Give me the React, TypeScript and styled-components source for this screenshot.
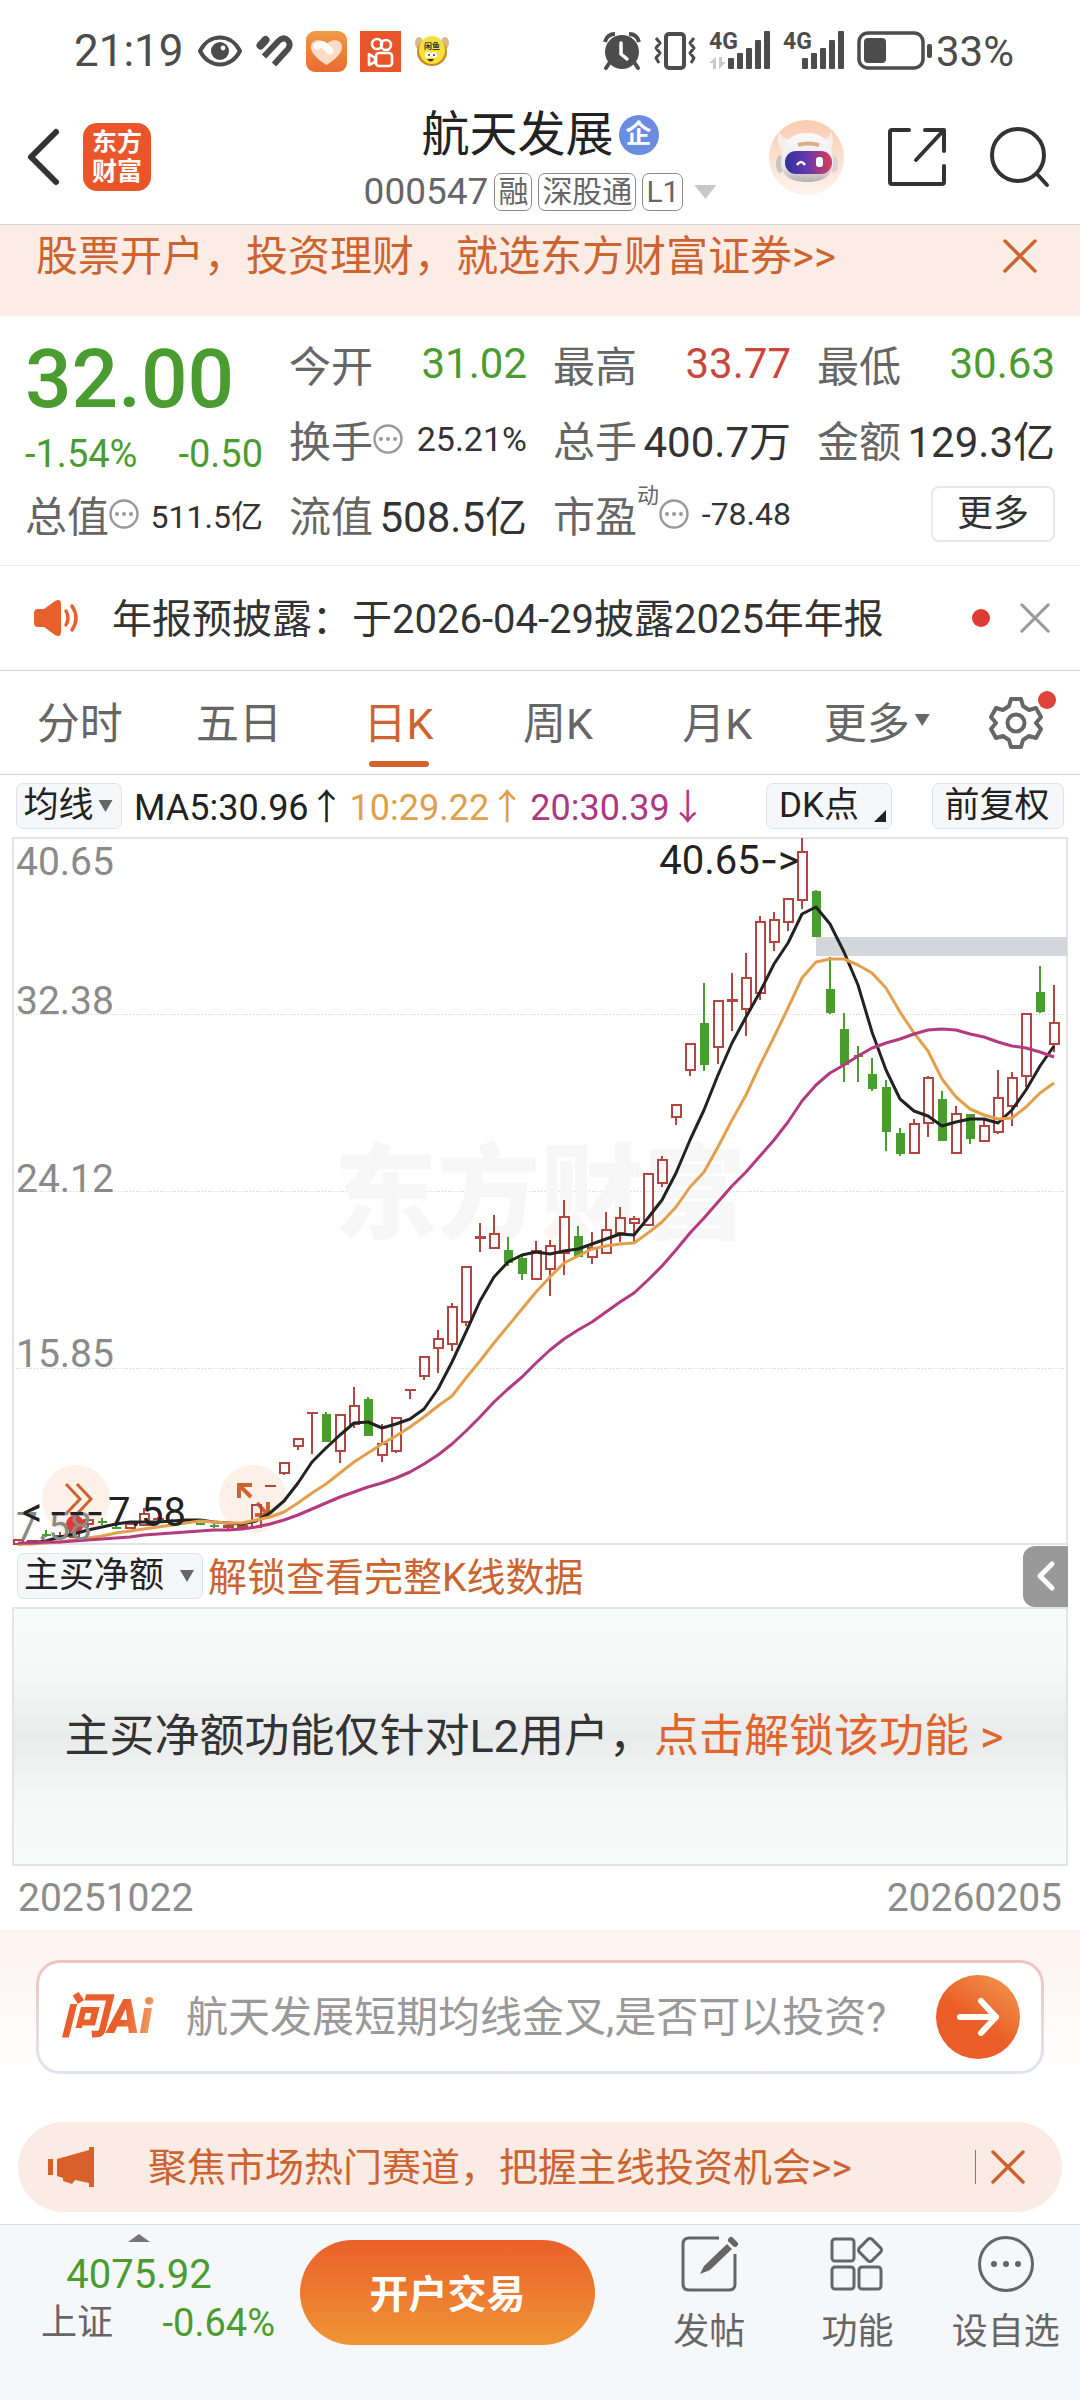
import React, { useState } from "react";
import styled, { createGlobalStyle, css } from "styled-components";

const ORANGE = "#cd6430";
const GREEN = "#4a9c30";
const RED = "#c9463d";

type Candle = [open: number, close: number, high: number, low: number, up: 0 | 1];

// body top, body bottom, wick top, wick bottom, 1 = red (up) / 0 = green (down)
const candles: Candle[] = [
  [702, 706, 702, 706, 1],
  [702, 703, 702, 703, 1],
  [696, 698, 692, 699, 0],
  [697, 699, 694, 702, 1],
  [692, 699, 690, 700, 1],
  [682, 686, 680, 689, 1],
  [683, 685, 680, 687, 0],
  [689, 690, 688, 690, 0],
  [686, 690, 685, 690, 1],
  [676, 687, 670, 688, 1],
  [680, 682, 679, 683, 1],
  [682, 683, 681, 684, 0],
  [683, 684, 682, 685, 1],
  [685, 687, 685, 687, 0],
  [687, 689, 686, 690, 0],
  [687, 690, 686, 691, 1],
  [687, 690, 686, 691, 1],
  [667, 689, 667, 689, 1],
  [647, 648, 647, 648, 1],
  [625, 635, 625, 637, 1],
  [601, 608, 601, 612, 1],
  [574, 575, 574, 616, 1],
  [576, 604, 574, 604, 0],
  [577, 613, 577, 625, 1],
  [568, 586, 549, 590, 1],
  [561, 598, 559, 598, 0],
  [606, 617, 586, 624, 1],
  [580, 613, 580, 615, 1],
  [551, 553, 551, 561, 1],
  [519, 538, 519, 542, 1],
  [501, 510, 492, 535, 1],
  [469, 506, 465, 513, 1],
  [429, 484, 429, 488, 1],
  [398, 401, 385, 414, 1],
  [396, 410, 377, 410, 1],
  [412, 425, 399, 428, 0],
  [420, 436, 418, 442, 0],
  [413, 441, 403, 441, 1],
  [408, 431, 402, 458, 1],
  [379, 415, 362, 437, 1],
  [398, 419, 388, 419, 0],
  [410, 419, 394, 426, 1],
  [392, 415, 374, 415, 1],
  [380, 395, 369, 404, 1],
  [381, 385, 378, 404, 1],
  [336, 387, 336, 387, 1],
  [322, 345, 318, 349, 1],
  [267, 279, 267, 287, 1],
  [206, 232, 206, 238, 1],
  [185, 227, 145, 233, 0],
  [163, 209, 163, 226, 1],
  [161, 164, 135, 193, 1],
  [140, 171, 115, 198, 1],
  [84, 155, 78, 162, 1],
  [82, 104, 74, 113, 1],
  [61, 84, 61, 93, 1],
  [14, 62, 0, 71, 1],
  [53, 99, 52, 99, 0],
  [151, 175, 119, 176, 0],
  [191, 227, 175, 244, 0],
  [217, 219, 208, 244, 0],
  [236, 251, 220, 253, 0],
  [249, 294, 242, 313, 0],
  [295, 316, 290, 318, 0],
  [286, 315, 281, 315, 1],
  [240, 285, 238, 299, 1],
  [261, 303, 253, 303, 0],
  [276, 315, 268, 315, 1],
  [276, 301, 276, 306, 0],
  [288, 303, 281, 303, 1],
  [260, 294, 232, 296, 1],
  [240, 268, 234, 288, 1],
  [176, 238, 176, 249, 1],
  [154, 174, 128, 175, 0],
  [185, 206, 147, 214, 1],
];

const ma5 = [
  706, 705, 703, 699, 696, 692, 689, 686, 684, 684, 684, 683, 682, 682, 684,
  685, 686, 683, 675, 663, 645, 624, 610, 597, 585, 584, 590, 586, 581, 571,
  551, 524, 494, 463, 439, 424, 417, 414, 416, 413, 411, 406, 401, 396, 397,
  380, 362, 335, 302, 272, 237, 205, 179, 154, 126, 105, 76, 69, 86, 114, 147,
  194, 232, 261, 273, 278, 288, 284, 281, 281, 285, 272, 252, 228, 208,
];

const ma10 = [
  706, 706, 705, 704, 702, 700, 698, 695, 693, 691, 689, 687, 685, 683, 684,
  685, 685, 682, 679, 674, 665, 655, 646, 635, 624, 615, 606, 598, 589, 579,
  568, 558, 540, 523, 505, 488, 471, 454, 439, 425, 418, 411, 408, 406, 405,
  395, 384, 369, 349, 334, 309, 282, 257, 227, 199, 170, 140, 124, 121, 121,
  127, 135, 150, 174, 195, 213, 241, 259, 271, 277, 281, 280, 269, 255, 245,
];

const ma20 = [
  705, 705, 704, 704, 703, 702, 701, 700, 699, 697, 696, 695, 694, 693, 692,
  692, 691, 689, 686, 682, 677, 671, 665, 659, 654, 649, 645, 640, 634, 626,
  617, 606, 593, 579, 564, 551, 539, 525, 512, 501, 492, 484, 474, 464, 455,
  442, 428, 412, 395, 380, 364, 348, 334, 318, 302, 284, 263, 247, 235, 227,
  218, 210, 205, 201, 196, 192, 191, 192, 196, 199, 204, 208, 210, 214, 219,
];

const axis = [
  { label: "40.65", y: 37 },
  { label: "32.38", y: 176 },
  { label: "24.12", y: 354 },
  { label: "15.85", y: 529 },
  { label: "7.58", y: 702 },
];

const tabs = ["分时", "五日", "日K", "周K", "月K", "更多"];

const candleX = (i: number) => 18 + i * 14;
const toPoints = (values: number[]) =>
  values.map((y, i) => `${candleX(i)},${y}`).join(" ");

const KLine = () => (
  <ChartSvg viewBox="12 -1 1056 708" role="img" aria-label="日K">
    {[176, 353, 530].map((y) => (
      <line
        key={y}
        x1="13"
        x2="1067"
        y1={y + 0.5}
        y2={y + 0.5}
        stroke="#cfcfcf"
        strokeDasharray="1 2"
      />
    ))}
    <text x="334" y="393" fontSize="103" fontWeight="900" fill="#f7f7f7">
      东方财富
    </text>
    <rect x="13" y="0" width="1054" height="706" fill="none" stroke="#e3e3e5" strokeWidth="2" />
    <rect x="816" y="99" width="251" height="19" fill="#d5d6dc" />
    {candles.map(([top, bottom, high, low, up], i) => {
      const x = candleX(i);
      if (!up) {
        return (
          <g key={i} fill="#489d2e">
            <rect x={x - 1} y={high} width="2" height={low - high} />
            <rect x={x - 4} y={top} width="9" height={Math.max(bottom - top, 2)} />
          </g>
        );
      }
      const flat = bottom - top < 4;
      return (
        <g key={i} fill="#b24640">
          <rect x={x - 1} y={high} width="2" height={top - high} />
          <rect x={x - 1} y={bottom} width="2" height={low - bottom} />
          {flat ? (
            <rect x={x - 5} y={top} width="11" height={Math.max(bottom - top, 2)} />
          ) : (
            <rect
              x={x - 4}
              y={top}
              width="9"
              height={bottom - top}
              fill="none"
              stroke="#b24640"
              strokeWidth="2"
            />
          )}
        </g>
      );
    })}
    <circle cx="75" cy="686" r="9" fill="#dd3d33" />
    <g fill="none" strokeWidth="3" strokeLinejoin="round">
      <polyline points={toPoints(ma5)} stroke="#222" />
      <polyline points={toPoints(ma10)} stroke="#e3a04c" />
      <polyline points={toPoints(ma20)} stroke="#b43a80" />
    </g>
    <g fontSize="39" fill="#8a8a8a">
      {axis.map((a) => (
        <text key={a.label} x="16" y={a.y}>
          {a.label}
        </text>
      ))}
    </g>
    <g fontSize="40" fill="#222">
      <text x="799" y="36" textAnchor="end">
        40.65<tspan fontFamily="Inter">-</tspan>&gt;
      </text>
      <text x="22" y="688">
        &lt;
        <tspan x="49" fontFamily="Inter">
          ---
        </tspan>
        <tspan x="108">7.58</tspan>
      </text>
    </g>
  </ChartSvg>
);

const SignalIcon = ({ data }: { data?: boolean }) => (
  <svg width="62" height="40" viewBox="0 0 62 40" fill="#4c4c4c">
    <text x="0" y="18" fontSize="23" fontWeight="700" fontFamily="Roboto, sans-serif">
      4G
    </text>
    {data && (
      <g fill="#c9c9c9">
        <path d="M0 32 7 26V38H4V32Z" />
        <path d="M10 26V38L17 31H13V26Z" />
      </g>
    )}
    <rect x="19" y="27" width="6" height="11" rx="1" />
    <rect x="28" y="22" width="6" height="16" rx="1" />
    <rect x="37" y="17" width="6" height="21" rx="1" />
    <rect x="46" y="9" width="6" height="29" rx="1" />
    <rect x="55" y="0" width="6" height="38" rx="1" />
  </svg>
);

const CloseIcon = ({ size }: { size: number }) => (
  <svg
    width={size}
    height={size}
    viewBox="0 0 34 34"
    fill="none"
    stroke="currentColor"
    strokeWidth="3.5"
    strokeLinecap="round"
  >
    <path d="M2 2 32 32M32 2 2 32" />
  </svg>
);

const InfoIcon = () => (
  <svg width="30" height="30" viewBox="0 0 30 30" fill="#999">
    <circle cx="15" cy="15" r="13.5" fill="none" stroke="#999" strokeWidth="2.4" />
    <circle cx="8" cy="15" r="2" />
    <circle cx="15" cy="15" r="2" />
    <circle cx="22" cy="15" r="2" />
  </svg>
);

const StatusIcons = () => (
  <StatusGroup>
    <Clock>21:19</Clock>
    <svg width="46" height="32" viewBox="0 0 46 32">
      <path
        d="M3 16C12-2 34-2 43 16C34 34 12 34 3 16Z"
        fill="none"
        stroke="#4c4c4c"
        strokeWidth="4"
        strokeLinejoin="round"
      />
      <circle cx="23" cy="16" r="9" fill="#4c4c4c" />
      <circle cx="26" cy="13" r="2.4" fill="#fff" />
    </svg>
    <svg
      width="37"
      height="32"
      viewBox="0 0 37 32"
      fill="none"
      stroke="#4c4c4c"
      strokeWidth="6"
    >
      <path d="M4.500 10.500 9.500 5" strokeWidth="8" strokeLinecap="round" />
      <path d="M8 21.500 22.500 6Q27 1.500 31.500 5Q35.500 9 32 14L18 29.500" />
    </svg>
    <svg width="41" height="41" viewBox="0 0 41 41">
      <defs>
        <linearGradient id="heartBg" x1="0" y1="0" x2="0" y2="1">
          <stop offset="0" stopColor="#f09a45" />
          <stop offset="1" stopColor="#ea6a33" />
        </linearGradient>
      </defs>
      <rect width="41" height="41" rx="9" fill="url(#heartBg)" />
      <path
        d="M20.500 34C11 28 5 22 5 16C5 8 15 7 20.500 13C26 7 36 8 36 16C36 22 30 28 20.500 34Z"
        fill="#fbdcc6"
      />
      <path d="M11 15Q16 11 20 16L24 20" stroke="#fff" strokeWidth="7" strokeLinecap="round" fill="none" />
    </svg>
    <svg width="41" height="41" viewBox="0 0 41 41" fill="none" stroke="#fff" strokeWidth="2.600">
      <rect width="41" height="41" fill="#e8552a" stroke="none" />
      <circle cx="17" cy="13" r="5" />
      <circle cx="26" cy="14" r="5" />
      <rect x="16" y="22" width="16" height="13" rx="3" />
      <path d="M9 23 15 27V31L9 34Z" strokeLinejoin="round" />
    </svg>
    <svg width="36" height="32" viewBox="0 0 36 32">
      <ellipse cx="5" cy="8" rx="4" ry="6" fill="#d9b98c" />
      <ellipse cx="31" cy="8" rx="4" ry="6" fill="#d9b98c" />
      <ellipse cx="18" cy="17" rx="15" ry="14" fill="#c98c22" />
      <ellipse cx="18" cy="15" rx="13" ry="14" fill="#f6e13c" />
      <text x="10" y="14" fontSize="8" fontWeight="700" fill="#333">
        闲鱼
      </text>
      <circle cx="14" cy="20" r="3" fill="#fff" />
      <circle cx="20" cy="20" r="3" fill="#fff" />
      <circle cx="15" cy="20" r="1" fill="#333" />
      <circle cx="20" cy="20" r="1" fill="#333" />
      <path d="M13 24Q17 29 20 24Z" fill="#5a2a17" />
    </svg>
  </StatusGroup>
);

const RobotIcon = () => (
  <svg width="75" height="75" viewBox="0 0 75 75">
    <defs>
      <linearGradient id="robotBg" x1="0" y1="0" x2="0" y2="1">
        <stop offset="0" stopColor="#f9ccb0" />
        <stop offset="1" stopColor="#fef4ee" />
      </linearGradient>
      <linearGradient id="robotHead" x1="0" y1="0" x2="0" y2="1">
        <stop offset="0" stopColor="#fbfafa" />
        <stop offset="0.700" stopColor="#e9e6e6" />
        <stop offset="1" stopColor="#b5afaf" />
      </linearGradient>
      <linearGradient id="robotFace" x1="0" y1="0" x2="1" y2="0">
        <stop offset="0" stopColor="#33309c" />
        <stop offset="0.450" stopColor="#6138ae" />
        <stop offset="1" stopColor="#d93f5c" />
      </linearGradient>
    </defs>
    <circle cx="37.500" cy="37.500" r="37.500" fill="url(#robotBg)" />
    <path d="M10 12Q6 24 14 31L24 20Q14 20 10 12ZM62 12Q67 24 60 31L50 20Q60 20 62 12Z" fill="#f6eeeb" />
    <ellipse cx="11" cy="44" rx="4" ry="9" fill="#c9c3c3" />
    <ellipse cx="65" cy="44" rx="4" ry="9" fill="#d9d3d3" />
    <path
      d="M38 13C57 13 64 26 64 43C64 57 52 62 38 62C24 62 12 57 12 43C12 26 19 13 38 13Z"
      fill="url(#robotHead)"
    />
    <path d="M29 25Q39 22 50 25" stroke="#dcae86" strokeWidth="4" fill="none" />
    <rect x="16" y="31" width="47" height="23" rx="11" fill="url(#robotFace)" />
    <path d="M28 45Q32 39 36 45" stroke="#fff" strokeWidth="2.500" fill="none" />
    <rect x="47" y="37" width="7" height="10" rx="3" fill="#fff" />
  </svg>
);

const App = () => {
  const [active, setActive] = useState("日K");
  const [question, setQuestion] = useState("");

  return (
    <Page>
      <GlobalStyle />
      <StatusBar>
        <StatusIcons />
        <StatusGroup $end>
          <svg width="38" height="38" viewBox="0 0 38 38" fill="#4c4c4c">
            <circle cx="19" cy="20" r="17" />
            <path d="M7 30 3 36M31 30 35 36" stroke="#4c4c4c" strokeWidth="4" strokeLinecap="round" />
            <path
              d="M2 10Q4 2 12 2M36 10Q34 2 26 2"
              fill="none"
              stroke="#4c4c4c"
              strokeWidth="4"
            />
            <path d="M18 11V22L24 27" fill="none" stroke="#fff" strokeWidth="3.500" strokeLinecap="round" />
          </svg>
          <svg
            width="44"
            height="40"
            viewBox="0 0 44 40"
            fill="none"
            stroke="#4c4c4c"
            strokeWidth="4"
            strokeLinejoin="round"
          >
            <rect x="13" y="3" width="18" height="34" rx="3" />
            <path d="M3 7 7 12 3 17 7 22 3 27 6 32M41 7 37 12 41 17 37 22 41 27 38 32" strokeWidth="3" />
          </svg>
          <SignalIcon data />
          <SignalIcon />
          <svg width="75" height="40" viewBox="0 0 75 40" fill="#4c4c4c">
            <rect x="2" y="2" width="64" height="35" rx="9" fill="none" stroke="#4c4c4c" strokeWidth="3.500" />
            <rect x="7" y="7" width="22" height="25" rx="4" />
            <rect x="70" y="13" width="5" height="14" rx="2" />
          </svg>
          <Percent>33%</Percent>
        </StatusGroup>
      </StatusBar>

      <Header>
        <HeaderSide>
          <IconButton aria-label="返回">
            <svg
              width="34"
              height="56"
              viewBox="0 0 34 56"
              fill="none"
              stroke="#333"
              strokeWidth="6"
              strokeLinecap="round"
              strokeLinejoin="round"
            >
              <path d="M29 3 4 28 29 53" />
            </svg>
          </IconButton>
          <AppLogo href="#home">
            <span>东方</span>
            <span>财富</span>
          </AppLogo>
        </HeaderSide>
        <TitleBlock>
          <Title>
            航天发展<CompanyBadge>企</CompanyBadge>
          </Title>
          <CodeRow>
            <span>000547</span>
            <Tag>融</Tag>
            <Tag>深股通</Tag>
            <Tag>L1</Tag>
            <Caret $width={22} $height={14} $color="#c8c8c8" />
          </CodeRow>
        </TitleBlock>
        <HeaderSide $end>
          <IconButton aria-label="助手">
            <RobotIcon />
          </IconButton>
          <IconButton aria-label="分享">
            <svg
              width="58"
              height="58"
              viewBox="0 0 58 58"
              fill="none"
              stroke="#333"
              strokeWidth="4"
              strokeLinecap="round"
              strokeLinejoin="round"
            >
              <path d="M21 2H4Q2 2 2 4V54Q2 56 4 56H54Q56 56 56 54V38" />
              <path d="M37 2H56V23M55 3 28 32" />
            </svg>
          </IconButton>
          <IconButton aria-label="搜索">
            <svg
              width="60"
              height="60"
              viewBox="0 0 60 60"
              fill="none"
              stroke="#333"
              strokeWidth="4"
              strokeLinecap="round"
            >
              <circle cx="28" cy="28" r="26" />
              <path d="M47 47 57 58" />
            </svg>
          </IconButton>
        </HeaderSide>
      </Header>

      <AdBanner>
        <a href="#open">股票开户，投资理财，就选东方财富证券&gt;&gt;</a>
        <IconButton aria-label="关闭">
          <CloseIcon size={34} />
        </IconButton>
      </AdBanner>

      <Quote>
        <PriceBlock>
          <Price>32.00</Price>
          <Change>
            <span>-1.54%</span>
            <span>-0.50</span>
          </Change>
        </PriceBlock>
        <Cell>
          <Label>今开</Label>
          <Value $color={GREEN}>31.02</Value>
        </Cell>
        <Cell>
          <Label>最高</Label>
          <Value $color={RED}>33.77</Value>
        </Cell>
        <Cell>
          <Label>最低</Label>
          <Value $color={GREEN}>30.63</Value>
        </Cell>
        <Cell>
          <Label>
            换手
            <InfoIcon />
          </Label>
          <Value $size={34}>25.21%</Value>
        </Cell>
        <Cell>
          <Label>总手</Label>
          <Value>400.7万</Value>
        </Cell>
        <Cell>
          <Label>金额</Label>
          <Value>129.3亿</Value>
        </Cell>
        <Cell>
          <Label>
            总值
            <InfoIcon />
          </Label>
          <Value $size={32}>511.5亿</Value>
        </Cell>
        <Cell>
          <Label>流值</Label>
          <Value>508.5亿</Value>
        </Cell>
        <Cell>
          <Label>
            市盈<Sup>动</Sup>
            <InfoIcon />
          </Label>
          <Value $size={32}>-78.48</Value>
        </Cell>
        <Cell $end>
          <MoreButton>更多</MoreButton>
        </Cell>
      </Quote>

      <Notice>
        <svg width="46" height="36" viewBox="0 0 46 36" fill="#ea602c">
          <path d="M0 13Q0 9 4 9H10L21 1Q27-2 27 4V32Q27 38 21 35L10 27H4Q0 27 0 23Z" />
          <g fill="none" stroke="#ea602c" strokeWidth="3.500" strokeLinecap="round">
            <path d="M32 11Q36 18 32 25" />
            <path d="M38 6Q46 18 38 30" />
          </g>
        </svg>
        <NoticeText href="#notice">年报预披露：于2026-04-29披露2025年年报</NoticeText>
        <Dot />
        <IconButton aria-label="关闭公告">
          <CloseIcon size={30} />
        </IconButton>
      </Notice>

      <Tabs>
        {tabs.map((t) => (
          <Tab key={t} $active={t === active} onClick={() => setActive(t)}>
            {t}
            {t === "更多" && <Caret $width={15} $height={12} $color="#666" />}
          </Tab>
        ))}
        <SettingsButton aria-label="设置">
          <svg
            width="54"
            height="54"
            viewBox="0 0 54 54"
            fill="none"
            stroke="#666"
            strokeWidth="4"
            strokeLinejoin="round"
          >
            <path d="M22 3H32L34 10L40 14L47 12L52 21L47 27L52 33L47 42L40 40L34 44L32 51H22L20 44L14 40L7 42L2 33L7 27L2 21L7 12L14 14L20 10Z" />
            <circle cx="27" cy="27" r="8.500" />
          </svg>
          <SettingsDot />
        </SettingsButton>
      </Tabs>

      <Toolbar>
        <Chip>
          均线
          <Caret $width={14} $height={12} $color="#666" />
        </Chip>
        <Averages>
          <Average $color="#222">MA5:30.96↑</Average>
          <Average $color="#e0a04a">10:29.22↑</Average>
          <Average $color="#b0387f">20:30.39↓</Average>
        </Averages>
        <Chip $corner>DK点</Chip>
        <Chip>前复权</Chip>
      </Toolbar>

      <Chart>
        <RoundButton aria-label="展开" $left={30}>
          <svg width="68" height="68" viewBox="0 0 68 68" fill="none" stroke={ORANGE} strokeWidth="3">
            <path d="M24 19 38 34 24 49M35 19 49 34 35 49" />
          </svg>
        </RoundButton>
        <RoundButton aria-label="全屏" $left={207}>
          <svg width="68" height="68" viewBox="0 0 68 68" fill="none" stroke={ORANGE} strokeWidth="4">
            <path d="M20 33V20H33M21 21 32 32" />
            <path d="M49 37V50H36M48 49 38 38" />
          </svg>
        </RoundButton>
        <KLine />
      </Chart>

      <SubBar>
        <Chip $wide>
          主买净额
          <Caret $width={14} $height={12} $color="#666" />
        </Chip>
        <SubLink href="#unlock">解锁查看完整K线数据</SubLink>
        <Collapse aria-label="收起">
          <svg
            width="20"
            height="30"
            viewBox="0 0 20 30"
            fill="none"
            stroke="#fff"
            strokeWidth="5"
            strokeLinecap="round"
            strokeLinejoin="round"
          >
            <path d="M16 3 4 15 16 27" />
          </svg>
        </Collapse>
      </SubBar>

      <LockedPanel>
        <span>主买净额功能仅针对L2用户，</span>
        <a href="#level2">点击解锁该功能 &gt;</a>
      </LockedPanel>
      <Dates>
        <span>20251022</span>
        <span>20260205</span>
      </Dates>

      <AskSection>
        <AskCard>
          <AskLogo htmlFor="ask">问Ai</AskLogo>
          <AskInput
            id="ask"
            value={question}
            onChange={(e) => setQuestion(e.target.value)}
            placeholder="航天发展短期均线金叉,是否可以投资?"
          />
          <SendButton aria-label="发送">
            <svg
              width="44"
              height="40"
              viewBox="0 0 44 40"
              fill="none"
              stroke="#fff"
              strokeWidth="6"
              strokeLinecap="round"
              strokeLinejoin="round"
            >
              <path d="M4 20H40M25 4 40 20 25 36" />
            </svg>
          </SendButton>
        </AskCard>
      </AskSection>

      <Promo>
        <svg width="46" height="40" viewBox="0 0 46 40" fill="#d9602a">
          <rect x="0" y="12" width="5" height="16" />
          <path d="M9 12 41 3V0H46V40H41V36L27 33L24 37L15 34V31L9 29Z" />
        </svg>
        <PromoText href="#promo">聚焦市场热门赛道，把握主线投资机会&gt;&gt;</PromoText>
        <PromoClose aria-label="关闭推广">
          <CloseIcon size={34} />
        </PromoClose>
      </Promo>

      <Footer>
        <IndexBox>
          <CaretUp />
          <IndexValue>4075.92</IndexValue>
          <IndexRow>
            <IndexName>上证</IndexName>
            <span>-0.64%</span>
          </IndexRow>
        </IndexBox>
        <TradeButton>开户交易</TradeButton>
        <FooterNav>
          <NavButton>
            <svg width="58" height="58" viewBox="0 0 58 58" fill="none" stroke="#666" strokeWidth="3">
              <path d="M39 3H9Q3 3 3 9V49Q3 55 9 55H49Q55 55 55 49V19" />
              <path d="M47 9 52 14 30 35 20 39 24 31Z" fill="#666" stroke="none" />
              <path d="M51 5 55 9" strokeWidth="6" strokeLinecap="round" />
            </svg>
            发帖
          </NavButton>
          <NavButton>
            <svg width="58" height="58" viewBox="0 0 58 58" fill="none" stroke="#666" strokeWidth="3">
              <rect x="4" y="4" width="22" height="22" rx="3" />
              <rect x="4" y="32" width="22" height="22" rx="3" />
              <rect x="31" y="32" width="22" height="22" rx="3" />
              <rect x="33" y="6" width="18" height="18" rx="3" transform="rotate(45 42 15)" />
            </svg>
            功能
          </NavButton>
          <NavButton>
            <svg width="58" height="58" viewBox="0 0 58 58" fill="#666">
              <circle cx="29" cy="29" r="26.500" fill="none" stroke="#666" strokeWidth="3" />
              <circle cx="17" cy="29" r="3" />
              <circle cx="29" cy="29" r="3" />
              <circle cx="41" cy="29" r="3" />
            </svg>
            设自选
          </NavButton>
        </FooterNav>
      </Footer>
    </Page>
  );
};

const GlobalStyle = createGlobalStyle`
  * {
    box-sizing: border-box;
  }
  body {
    margin: 0;
    background: #fff;
    color: #333;
    font-family: Roboto, "Noto Sans CJK SC", sans-serif;
  }
  a {
    color: inherit;
    text-decoration: none;
  }
  button {
    margin: 0;
    padding: 0;
    border: none;
    background: none;
    color: inherit;
    font: inherit;
    cursor: pointer;
  }
  svg {
    display: block;
    flex: none;
    overflow: visible;
  }
`;

const Page = styled.main`
  width: 100%;
  white-space: nowrap;
`;

const StatusBar = styled.div`
  display: flex;
  justify-content: space-between;
  align-items: center;
  height: 100px;
  padding: 2px 66px 0 74px;
  color: #4c4c4c;
`;

const StatusGroup = styled.div<{ $end?: boolean }>`
  display: flex;
  align-items: center;
  gap: ${({ $end }) => ($end ? 12 : 13)}px;
`;

const Clock = styled.span`
  font-size: 44px;
`;

const Percent = styled.span`
  margin-left: -8px;
  font-size: 42px;
`;

const Header = styled.header`
  display: grid;
  grid-template-columns: 1fr auto 1fr;
  height: 125px;
  border-bottom: 1px solid #d3d4d8;
`;

const HeaderSide = styled.div<{ $end?: boolean }>`
  display: flex;
  align-items: center;
  justify-content: ${({ $end }) => ($end ? "flex-end" : "flex-start")};
  gap: ${({ $end }) => ($end ? 44 : 22)}px;
  padding: 0 30px 10px 27px;
`;

const IconButton = styled.button`
  display: flex;
  flex: none;
`;

const AppLogo = styled.a`
  display: flex;
  flex-direction: column;
  justify-content: center;
  align-items: center;
  width: 68px;
  height: 68px;
  border-radius: 14px;
  background: #ea5529;
  color: #fff;
  font-size: 25px;
  font-weight: 700;
  line-height: 29px;
`;

const TitleBlock = styled.div`
  display: flex;
  flex-direction: column;
  align-items: center;
  padding-top: 6px;
`;

const Title = styled.h1`
  display: flex;
  align-items: center;
  gap: 5px;
  margin: 0;
  color: #222;
  font-size: 48px;
  font-weight: 400;
  line-height: 58px;
`;

const CompanyBadge = styled.span`
  width: 40px;
  height: 40px;
  border-radius: 50%;
  background: #6b8de1;
  color: #fff;
  font-size: 26px;
  font-weight: 700;
  line-height: 38px;
  text-align: center;
`;

const CodeRow = styled.div`
  display: flex;
  align-items: center;
  gap: 6px;
  color: #666;
  font-size: 37px;
  line-height: 56px;
`;

const Tag = styled.span`
  height: 38px;
  padding: 0 3px;
  border: 1px solid #8a8a8a;
  border-radius: 7px;
  font-size: 30px;
  line-height: 36px;
`;

const Caret = styled.i<{ $width: number; $height: number; $color: string }>`
  flex: none;
  width: ${({ $width }) => $width}px;
  height: ${({ $height }) => $height}px;
  margin-left: 5px;
  background: ${({ $color }) => $color};
  clip-path: polygon(0 0, 100% 0, 50% 100%);
`;

const AdBanner = styled.div`
  display: flex;
  justify-content: space-between;
  align-items: flex-start;
  height: 91px;
  padding: 14px 43px 0 36px;
  background: #fbede6;
  color: ${ORANGE};
  font-size: 42px;
  line-height: 36px;
`;

const Quote = styled.section`
  display: grid;
  grid-template-columns: repeat(4, 1fr);
  grid-template-rows: repeat(3, 75px);
  column-gap: 26px;
  padding: 10px 25px 14px;
  border-bottom: 1px solid #ececec;
`;

const PriceBlock = styled.div`
  grid-row: span 2;
  color: ${GREEN};
`;

const Price = styled.div`
  padding-top: 4px;
  font-size: 82px;
  font-weight: 500;
  line-height: 98px;
`;

const Change = styled.div`
  display: flex;
  justify-content: space-between;
  font-size: 38px;
  line-height: 52px;
`;

const Cell = styled.div<{ $end?: boolean }>`
  display: flex;
  justify-content: ${({ $end }) => ($end ? "flex-end" : "space-between")};
  align-items: center;
`;

const Label = styled.span`
  display: flex;
  align-items: center;
  color: #666;
  font-size: 42px;
`;

const Value = styled.span<{ $color?: string; $size?: number }>`
  color: ${({ $color }) => $color ?? "#333"};
  font-size: ${({ $size }) => $size ?? 42}px;
`;

const Sup = styled.sup`
  align-self: flex-start;
  font-size: 22px;
  line-height: 26px;
`;

const MoreButton = styled.button`
  width: 124px;
  height: 56px;
  border: 2px solid #e8e8e8;
  border-radius: 8px;
  font-size: 36px;
  line-height: 50px;
`;

const Notice = styled.div`
  display: flex;
  align-items: center;
  height: 105px;
  padding: 0 30px 0 34px;
  border-bottom: 1px solid #d6d6d8;
  color: #999;
`;

const NoticeText = styled.a`
  flex: 1;
  margin-left: 32px;
  padding-bottom: 5px;
  color: #333;
  font-size: 40px;
`;

const Dot = styled.i`
  width: 18px;
  height: 18px;
  margin-right: 30px;
  border-radius: 50%;
  background: #dd3b34;
`;

const Tabs = styled.nav`
  display: flex;
  height: 104px;
  padding-right: 4px;
  border-bottom: 1px solid #d6d6d8;
`;

const Tab = styled.button<{ $active: boolean }>`
  position: relative;
  display: flex;
  flex: 4;
  justify-content: center;
  align-items: center;
  padding-bottom: 5px;
  color: ${({ $active }) => ($active ? ORANGE : "#666")};
  font-size: 43px;

  ${({ $active }) =>
    $active &&
    css`
      &::after {
        content: "";
        position: absolute;
        bottom: 7px;
        width: 60px;
        height: 6px;
        border-radius: 3px;
        background: #d5612b;
      }
    `}
`;

const SettingsButton = styled.button`
  position: relative;
  display: flex;
  flex: 3;
  justify-content: center;
  align-items: center;
`;

const SettingsDot = styled.i`
  position: absolute;
  top: 20px;
  right: 20px;
  width: 18px;
  height: 18px;
  border-radius: 50%;
  background: #e0443c;
`;

const Toolbar = styled.div`
  display: flex;
  align-items: center;
  height: 62px;
  padding: 0 16px;
`;

const Chip = styled.button<{ $corner?: boolean; $wide?: boolean }>`
  position: relative;
  display: flex;
  justify-content: ${({ $wide }) => ($wide ? "space-between" : "center")};
  align-items: center;
  min-width: ${({ $wide, $corner }) => ($wide ? 186 : $corner ? 126 : 106)}px;
  height: 46px;
  margin-right: ${({ $corner }) => ($corner ? 40 : 0)}px;
  padding: 0 ${({ $corner }) => ($corner ? 26 : 8)}px 0 6px;
  border: 1px solid #e0e2e6;
  border-radius: 7px;
  background: #f6f7f9;
  color: #222;
  font-size: 35px;
  line-height: 44px;

  &:last-child {
    min-width: 132px;
  }

  ${({ $corner }) =>
    $corner &&
    css`
      &::after {
        content: "";
        position: absolute;
        right: 5px;
        bottom: 6px;
        border: 6px solid #222;
        border-top-color: transparent;
        border-left-color: transparent;
      }
    `}
`;

const Averages = styled.div`
  display: flex;
  flex: 1;
  gap: 5px;
  margin-left: 12px;
  padding-bottom: 5px;
`;

const Average = styled.span<{ $color: string }>`
  color: ${({ $color }) => $color};
  font-size: 36px;
`;

const Chart = styled.section`
  position: relative;
  margin: 0 12px;
`;

const ChartSvg = styled.svg`
  position: relative;
  width: 100%;
  height: auto;
  pointer-events: none;
`;

const RoundButton = styled.button<{ $left: number }>`
  position: absolute;
  bottom: 12px;
  left: ${({ $left }) => $left}px;
  border-radius: 50%;
  background: #fcf0e9;
`;

const SubBar = styled.div`
  display: flex;
  align-items: center;
  height: 62px;
  padding: 0 12px 0 17px;
`;

const SubLink = styled.a`
  flex: 1;
  margin-left: 5px;
  padding-bottom: 5px;
  color: ${ORANGE};
  font-size: 39px;
`;

const Collapse = styled.button`
  display: flex;
  justify-content: center;
  align-items: center;
  width: 45px;
  height: 61px;
  border-radius: 12px 0 0 12px;
  background: #999;
`;

const LockedPanel = styled.div`
  display: flex;
  justify-content: center;
  align-items: center;
  height: 259px;
  margin: 0 12px;
  padding: 0 12px 8px 0;
  border: 2px solid #e3e4e5;
  background: linear-gradient(#f9fafa, #f6f7f7 25%, #eaebeb 50%, #f6f7f7 75%, #f9fafa);
  font-size: 45px;

  a {
    color: #e1632e;
  }
`;

const Dates = styled.div`
  display: flex;
  justify-content: space-between;
  padding: 0 18px;
  color: #8c8c8c;
  font-size: 39px;
  line-height: 64px;
`;

const AskSection = styled.section`
  padding: 30px 36px 48px;
  background: linear-gradient(#fdf2ef, #fff 80%);
`;

const AskCard = styled.div`
  display: flex;
  align-items: center;
  height: 114px;
  padding: 0 21px;
  border: 3px solid transparent;
  border-radius: 24px;
  background:
    linear-gradient(#fff, #fff) padding-box,
    linear-gradient(#efc4bd, #dfe6f0) border-box;
`;

const AskLogo = styled.label`
  width: 126px;
  background: linear-gradient(100deg, #e95f2b 50%, #f2a36d 75%);
  background-clip: text;
  color: transparent;
  font-size: 48px;
  font-style: italic;
  font-weight: 900;
  line-height: 60px;
`;

const AskInput = styled.input`
  flex: 1;
  min-width: 0;
  padding: 0;
  border: none;
  outline: none;
  background: none;
  color: #333;
  font: inherit;
  font-size: 42px;

  &::placeholder {
    color: #999;
    opacity: 1;
  }
`;

const SendButton = styled.button`
  display: flex;
  flex: none;
  justify-content: center;
  align-items: center;
  width: 84px;
  height: 84px;
  border-radius: 50%;
  background: linear-gradient(35deg, #eb5e29 45%, #f29b50);
`;

const Promo = styled.div`
  display: flex;
  align-items: center;
  height: 90px;
  margin: 0 18px 12px;
  padding: 0 37px 0 30px;
  border-radius: 45px;
  background: #faece5;
  color: ${ORANGE};
`;

const PromoText = styled.a`
  flex: 1;
  margin-left: 54px;
  padding-bottom: 7px;
  font-size: 39px;
`;

const PromoClose = styled.button`
  padding-left: 15px;
  border-left: 1px solid ${ORANGE};
`;

const Footer = styled.footer`
  display: flex;
  align-items: flex-start;
  min-height: 176px;
  border-top: 1px solid #d5d7db;
  background: #f6f7f9;
`;

const IndexBox = styled.div`
  display: flex;
  flex-direction: column;
  align-items: center;
  width: 278px;
  padding-top: 9px;
  color: ${GREEN};
`;

const CaretUp = styled.i`
  width: 22px;
  height: 8px;
  background: #77757c;
  clip-path: polygon(50% 0, 100% 100%, 0 100%);
`;

const IndexValue = styled.span`
  margin-top: 9px;
  font-size: 40px;
  line-height: 48px;
`;

const IndexRow = styled.div`
  display: flex;
  justify-content: space-between;
  width: 100%;
  padding: 0 3px 0 41px;
  font-size: 38px;
  line-height: 48px;
`;

const IndexName = styled.span`
  color: #666;
  font-size: 36px;
`;

const TradeButton = styled.button`
  width: 295px;
  height: 105px;
  margin: 15px 40px 0 22px;
  padding-bottom: 4px;
  border-radius: 53px;
  background: linear-gradient(#ea602a, #ef9535);
  color: #fff;
  font-size: 39px;
  font-weight: 700;
`;

const FooterNav = styled.nav`
  display: flex;
  flex: 1;
  padding-top: 10px;
`;

const NavButton = styled.button`
  display: flex;
  flex: 1;
  flex-direction: column;
  align-items: center;
  gap: 15px;
  color: #666;
  font-size: 36px;
  line-height: 48px;
`;

export default App;
